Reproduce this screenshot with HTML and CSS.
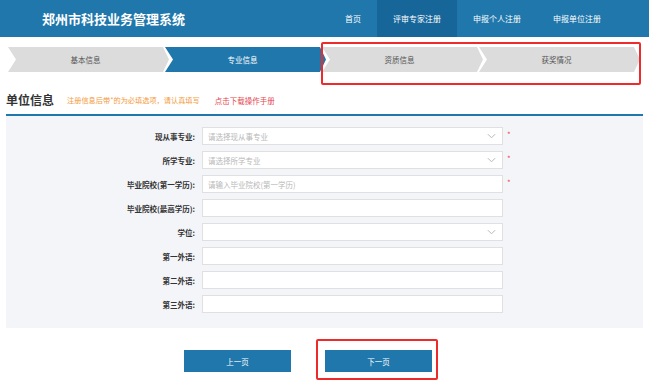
FILE: index.html
```html
<!DOCTYPE html>
<html lang="zh">
<head>
<meta charset="utf-8">
<title>郑州市科技业务管理系统</title>
<link rel="stylesheet" href="styles.css">
</head>
<body>
<header class="topbar">
  <h1 class="brand">郑州市科技业务管理系统</h1>
  <nav class="nav">
    <a class="nav-item">首页</a>
    <a class="nav-item active">评审专家注册</a>
    <a class="nav-item">申报个人注册</a>
    <a class="nav-item">申报单位注册</a>
  </nav>
</header>

<div class="steps">
  <div class="step">基本信息</div>
  <div class="step current">专业信息</div>
  <div class="step">资质信息</div>
  <div class="step">获奖情况</div>
  <div class="mark mark-steps"></div>
</div>

<div class="section-head">
  <h2 class="section-title">单位信息</h2>
  <span class="hint">注册信息后带*的为必填选项，请认真填写</span>
  <a class="manual">点击下载操作手册</a>
</div>

<section class="panel">
  <div class="row">
    <label class="lbl">现从事专业:</label>
    <div class="field select"><span class="ph">请选择现从事专业</span><svg class="chev" viewBox="0 0 10 6" width="9" height="6"><path d="M1 1l4 4 4-4" fill="none" stroke="#b5b5b5" stroke-width="1.1"/></svg></div>
    <span class="req">*</span>
  </div>
  <div class="row">
    <label class="lbl">所学专业:</label>
    <div class="field select"><span class="ph">请选择所学专业</span><svg class="chev" viewBox="0 0 10 6" width="9" height="6"><path d="M1 1l4 4 4-4" fill="none" stroke="#b5b5b5" stroke-width="1.1"/></svg></div>
    <span class="req">*</span>
  </div>
  <div class="row">
    <label class="lbl">毕业院校(第一学历):</label>
    <div class="field"><span class="ph">请输入毕业院校(第一学历)</span></div>
    <span class="req">*</span>
  </div>
  <div class="row">
    <label class="lbl">毕业院校(最高学历):</label>
    <div class="field"></div>
  </div>
  <div class="row">
    <label class="lbl">学位:</label>
    <div class="field select"><span class="ph"></span><svg class="chev" viewBox="0 0 10 6" width="9" height="6"><path d="M1 1l4 4 4-4" fill="none" stroke="#b5b5b5" stroke-width="1.1"/></svg></div>
  </div>
  <div class="row">
    <label class="lbl">第一外语:</label>
    <div class="field"></div>
  </div>
  <div class="row">
    <label class="lbl">第二外语:</label>
    <div class="field"></div>
  </div>
  <div class="row">
    <label class="lbl">第三外语:</label>
    <div class="field"></div>
  </div>
</section>

<div class="actions">
  <button class="btn">上一页</button>
  <button class="btn next">下一页<span class="mark mark-btn"></span></button>
</div>
</body>
</html>
```

FILE: styles.css
```css
* { box-sizing: border-box; }
html, body { margin: 0; padding: 0; background: #fff; }
body {
  font-family: "Noto Sans CJK SC", "Liberation Sans", sans-serif;
  width: 649px;
  height: 387px;
  overflow: hidden;
  position: relative;
}

.topbar {
  height: 37px;
  background: #1f77ab;
  display: flex;
  align-items: center;
  padding-left: 42px;
}
.brand {
  margin: 0;
  color: #fff;
  font-size: 13px;
  font-weight: bold;
  line-height: 1;
}
.nav {
  margin-left: auto;
  margin-right: 32px;
  display: flex;
  height: 37px;
}
.nav-item {
  display: flex;
  align-items: center;
  padding: 0 16px;
  color: #fff;
  font-size: 8px;
  height: 37px;
}
.nav-item.active { background: #17669a; }

.steps {
  position: relative;
  display: flex;
  margin-top: 10px;
  padding-left: 8px;
  height: 25px;
}
.step {
  width: 161px;
  height: 25px;
  background: #dcdcdc;
  color: #555;
  font-size: 7.5px;
  display: flex;
  align-items: center;
  justify-content: center;
  padding-right: 6px;
  clip-path: polygon(0 0, calc(100% - 6px) 0, 100% 50%, calc(100% - 6px) 100%, 0 100%, 8px 50%);
}
.step + .step { margin-left: -4px; }
.step.current { background: #1f77ab; color: #fff; }

.mark {
  position: absolute;
  border: 2px solid #ee2a2a;
  border-radius: 2px;
  pointer-events: none;
}
.mark-steps { left: 321px; top: -5px; width: 320px; height: 43px; }

.section-head {
  display: flex;
  align-items: center;
  height: 16px;
  margin: 20px 0 6px 6px;
}
.section-title {
  margin: 0;
  font-size: 12px;
  font-weight: bold;
  color: #333;
  line-height: 1;
}
.hint {
  margin-left: 13px;
  font-size: 7.2px;
  color: #f39a3c;
}
.manual {
  margin-left: 15px;
  font-size: 7.5px;
  color: #e4474f;
}

.panel {
  margin: 0 6px;
  border-top: 2px solid #1f77ab;
  background: #f3f5f9;
  padding: 11px 0 15px;
  display: flex;
  flex-direction: column;
  gap: 6px;
}
.row {
  display: flex;
  align-items: center;
  height: 18px;
}
.lbl {
  width: 189px;
  margin-right: 7px;
  text-align: right;
  font-size: 7.5px;
  font-weight: bold;
  color: #333;
}
.field {
  width: 301px;
  height: 18px;
  background: #fff;
  border: 1px solid #e0e0e0;
  display: flex;
  align-items: center;
  padding: 0 6px 0 5px;
}
.ph { font-size: 7.5px; color: #b8b8b8; }
.chev { margin-left: auto; }
.req {
  margin-left: 4px;
  color: #ef4b4b;
  font-size: 8px;
  align-self: flex-start;
  margin-top: 2px;
}

.actions {
  display: flex;
  gap: 34px;
  padding-left: 184px;
  margin-top: 22px;
}
.btn {
  position: relative;
  width: 107px;
  height: 22px;
  border: 0;
  background: #1f77ab;
  color: #fff;
  font-family: inherit;
  font-size: 7.5px;
  padding: 0;
}
.mark-btn { left: -9px; top: -11px; width: 122px; height: 41px; }
```
